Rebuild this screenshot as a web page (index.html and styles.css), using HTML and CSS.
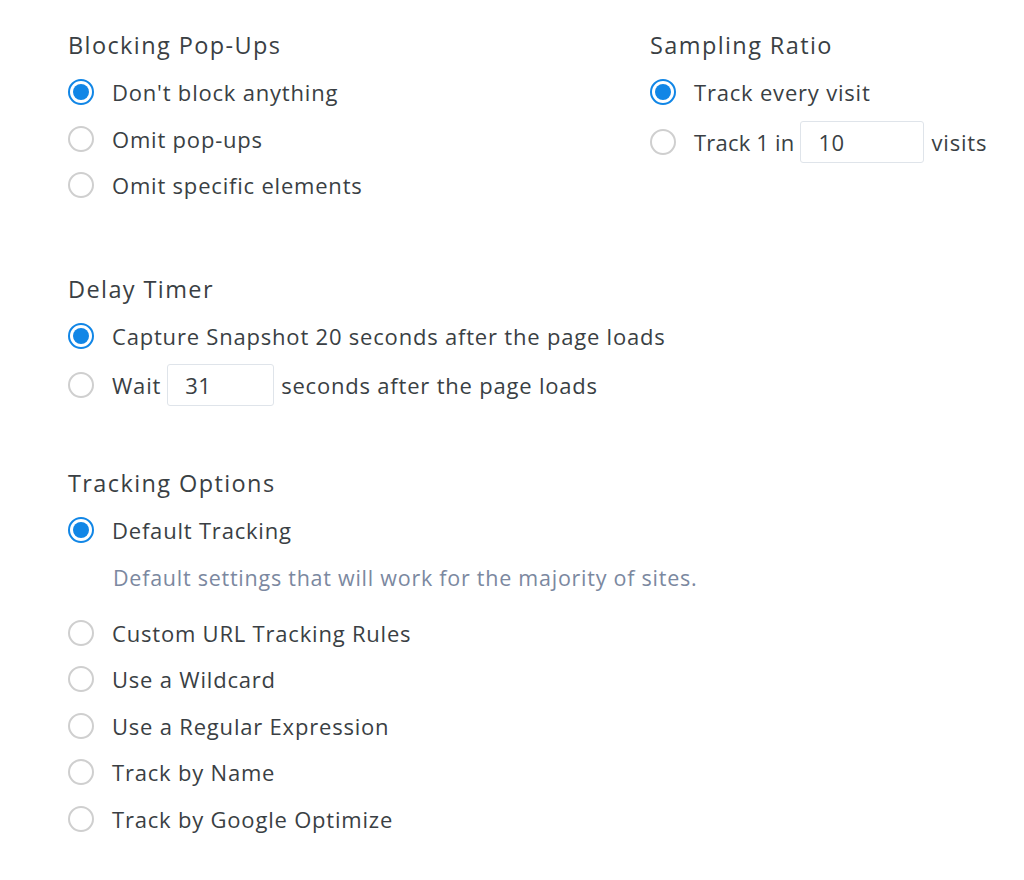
FILE: index.html
```html
<!DOCTYPE html>
<html>
<head>
<meta charset="utf-8">
<link rel="stylesheet" href="styles.css">
</head>
<body>
<div class="page">
  <div class="top">
    <section class="group">
      <h2 class="title">Blocking Pop-Ups</h2>
      <div class="opt"><span class="radio on"></span><span class="label">Don't block anything</span></div>
      <div class="opt"><span class="radio"></span><span class="label">Omit pop-ups</span></div>
      <div class="opt"><span class="radio"></span><span class="label">Omit specific elements</span></div>
    </section>
    <section class="group">
      <h2 class="title">Sampling Ratio</h2>
      <div class="opt"><span class="radio on"></span><span class="label">Track every visit</span></div>
      <div class="opt tall"><span class="radio"></span><span class="label tight">Track 1 in</span><span class="field w124">10</span><span class="label">visits</span></div>
    </section>
  </div>
  <section class="group delay">
    <h2 class="title">Delay Timer</h2>
    <div class="opt"><span class="radio on"></span><span class="label">Capture Snapshot 20 seconds after the page loads</span></div>
    <div class="opt tall"><span class="radio"></span><span class="label">Wait</span><span class="field w107">31</span><span class="label">seconds after the page loads</span></div>
  </section>
  <section class="group tracking">
    <h2 class="title">Tracking Options</h2>
    <div class="opt"><span class="radio on"></span><span class="label">Default Tracking</span></div>
    <p class="desc">Default settings that will work for the majority of sites.</p>
    <div class="opt"><span class="radio"></span><span class="label">Custom URL Tracking Rules</span></div>
    <div class="opt"><span class="radio"></span><span class="label">Use a Wildcard</span></div>
    <div class="opt"><span class="radio"></span><span class="label">Use a Regular Expression</span></div>
    <div class="opt"><span class="radio"></span><span class="label">Track by Name</span></div>
    <div class="opt"><span class="radio"></span><span class="label">Track by Google Optimize</span></div>
  </section>
</div>
</body>
</html>
```
FILE: styles.css
```css
html, body {
  margin: 0;
  padding: 0;
  background: #ffffff;
}
body {
  font-family: "Open Sans", "Liberation Sans", sans-serif;
  color: #3a3f44;
}
.page {
  padding: 29px 0 0 68px;
}
.top {
  display: grid;
  grid-template-columns: 582px auto;
}
.group {
  display: flex;
  flex-direction: column;
}
.title {
  margin: 0 0 8px 0;
  font-size: 23.5px;
  letter-spacing: 1.4px;
  font-weight: 400;
  line-height: 32px;
  height: 32px;
  white-space: nowrap;
}
.opt {
  display: flex;
  align-items: center;
  height: 46.5px;
}
.opt.tall {
  height: 52px;
}
.radio {
  box-sizing: border-box;
  width: 26px;
  height: 26px;
  border-radius: 50%;
  border: 2px solid #cfcfcf;
  margin-right: 18px;
  flex: none;
  position: relative;
}
.radio.on {
  border-color: #1186e6;
}
.radio.on::after {
  content: "";
  position: absolute;
  left: 3px;
  top: 3px;
  width: 16px;
  height: 16px;
  border-radius: 50%;
  background: #1186e6;
}
.label {
  font-size: 22px;
  letter-spacing: 0.8px;
  line-height: 26px;
  white-space: nowrap;
}
.label.tight {
  letter-spacing: 0.2px;
}
.field {
  box-sizing: border-box;
  height: 42px;
  border: 1px solid #dfe4ea;
  border-radius: 3px;
  margin: 0 7px 0 6px;
  padding-left: 17px;
  font-size: 22px;
  letter-spacing: 0.5px;
  line-height: 40px;
}
.w124 { width: 124px; }
.w107 { width: 107px; }
.delay {
  margin-top: 64px;
}
.tracking {
  margin-top: 56px;
}
.desc {
  margin: 0;
  padding: 12px 0 20px 45px;
  font-size: 21.5px;
  letter-spacing: 0.75px;
  line-height: 24px;
  color: #7b88a0;
  white-space: nowrap;
}
```
